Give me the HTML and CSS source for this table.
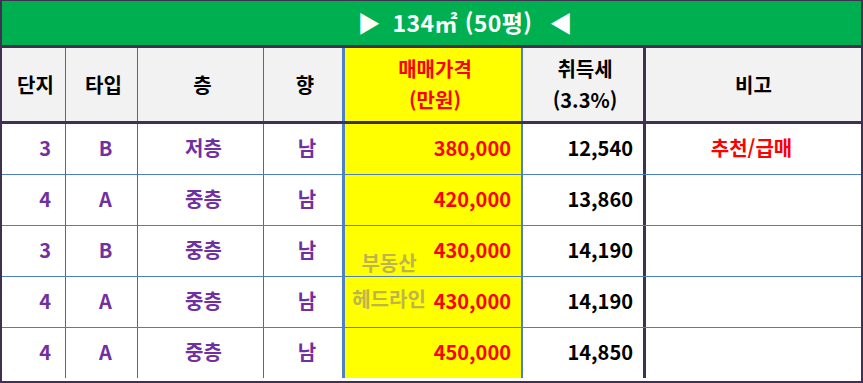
FILE: index.html
```html
<!DOCTYPE html>
<html lang="ko">
<head>
<meta charset="utf-8">
<link rel="stylesheet" href="styles.css">
</head>
<body>
<div class="sheet">
  <div class="title"><span class="tri">▶</span><span class="ttext">134㎡ (50평)</span><span class="tri tri-r">◀</span></div>
  <div class="row head">
    <div class="c c1">단지</div>
    <div class="c c2">타입</div>
    <div class="c c3">층</div>
    <div class="c c4">향</div>
    <div class="c c5 red two"><span>매매가격</span><span>(만원)</span></div>
    <div class="c c6 two"><span>취득세</span><span>(3.3%)</span></div>
    <div class="c c7">비고</div>
  </div>
  <div class="row data first">
    <div class="c c1 num">3</div><div class="c c2">B</div><div class="c c3">저층</div><div class="c c4">남</div>
    <div class="c c5 price">380,000</div><div class="c c6 tax">12,540</div><div class="c c7 note">추천/급매</div>
  </div>
  <div class="row data">
    <div class="c c1 num">4</div><div class="c c2">A</div><div class="c c3">중층</div><div class="c c4">남</div>
    <div class="c c5 price">420,000</div><div class="c c6 tax">13,860</div><div class="c c7 note"></div>
  </div>
  <div class="row data">
    <div class="c c1 num">3</div><div class="c c2">B</div><div class="c c3">중층</div><div class="c c4">남</div>
    <div class="c c5 price">430,000</div><div class="c c6 tax">14,190</div><div class="c c7 note"></div>
  </div>
  <div class="row data">
    <div class="c c1 num">4</div><div class="c c2">A</div><div class="c c3">중층</div><div class="c c4">남</div>
    <div class="c c5 price">430,000</div><div class="c c6 tax">14,190</div><div class="c c7 note"></div>
  </div>
  <div class="row data last">
    <div class="c c1 num">4</div><div class="c c2">A</div><div class="c c3">중층</div><div class="c c4">남</div>
    <div class="c c5 price">450,000</div><div class="c c6 tax">14,850</div><div class="c c7 note"></div>
  </div>
  <div class="watermark"><span>부동산</span><span>헤드라인</span></div>
</div>
</body>
</html>
```
FILE: styles.css
```css
html, body {
  margin: 0;
  padding: 0;
  background: #ffffff;
}
.sheet {
  position: relative;
  width: 863px;
  height: 383px;
  box-sizing: border-box;
  border-left: 2px solid #403151;
  border-right: 2px solid #403151;
  border-top: 1px solid #403151;
  border-bottom: 2px solid #403151;
  font-family: "Noto Sans CJK KR", "Noto Sans", sans-serif;
  font-weight: 700;
  overflow: hidden;
}
.title {
  height: 42px;
  background: #00b050;
  border-bottom: 3px solid #403151;
  color: #ffffff;
  font-size: 23px;
  display: flex;
  align-items: center;
  justify-content: center;
  gap: 12px;
  padding-left: 67px;
  padding-bottom: 2px;
}
.ttext {
  letter-spacing: 0.4px;
}
.tri {
  font-size: 23px;
}
.tri-r {
  margin-left: 5px;
}
.row {
  display: flex;
}
.c {
  box-sizing: border-box;
  display: flex;
  align-items: center;
  justify-content: center;
  border-right: 1px solid #2e75b6;
  font-size: 20px;
}
.c1 { width: 64px; }
.c2 { width: 72px; }
.c3 { width: 126px; }
.c4 { width: 81px; border-right: 3px solid #4f81bd; }
.c5 { width: 178px; border-right: 2px solid #4f81bd; background: #ffff00; }
.c6 { width: 123px; border-right: 3px solid #403151; }
.c7 { width: 215px; border-right: none; }

.head {
  height: 73px;
  background: #f2f2f2;
  border-bottom: 3px solid #403151;
  color: #000000;
}
.head .c {
  padding-left: 4px;
}
.head .c7 { padding-left: 0; }
.two {
  flex-direction: column;
  line-height: 31px;
  padding-bottom: 2px;
}
.red { color: #ff0000; }

.data {
  height: 50px;
  border-bottom: 1px solid #4a7fc0;
  color: #7030a0;
}
.data .c {
  padding-bottom: 3px;
}
.data.last {
  border-bottom: none;
}
.data .c1 {
  justify-content: flex-end;
  padding-right: 14px;
}
.data .c2 { padding-left: 8px; }
.data .c3 { padding-left: 6px; }
.data .c4 { padding-left: 8px; }
.price {
  color: #ff0000;
  justify-content: flex-end;
  padding-right: 10px;
}
.tax {
  color: #000000;
  justify-content: flex-end;
  padding-right: 10px;
}
.note {
  color: #ff0000;
  padding-right: 4px;
}
.watermark {
  position: absolute;
  left: 346px;
  top: 244px;
  width: 82px;
  display: flex;
  flex-direction: column;
  align-items: center;
  color: #bdb54a;
  font-size: 20px;
  font-weight: 700;
  line-height: 36px;
}
```
